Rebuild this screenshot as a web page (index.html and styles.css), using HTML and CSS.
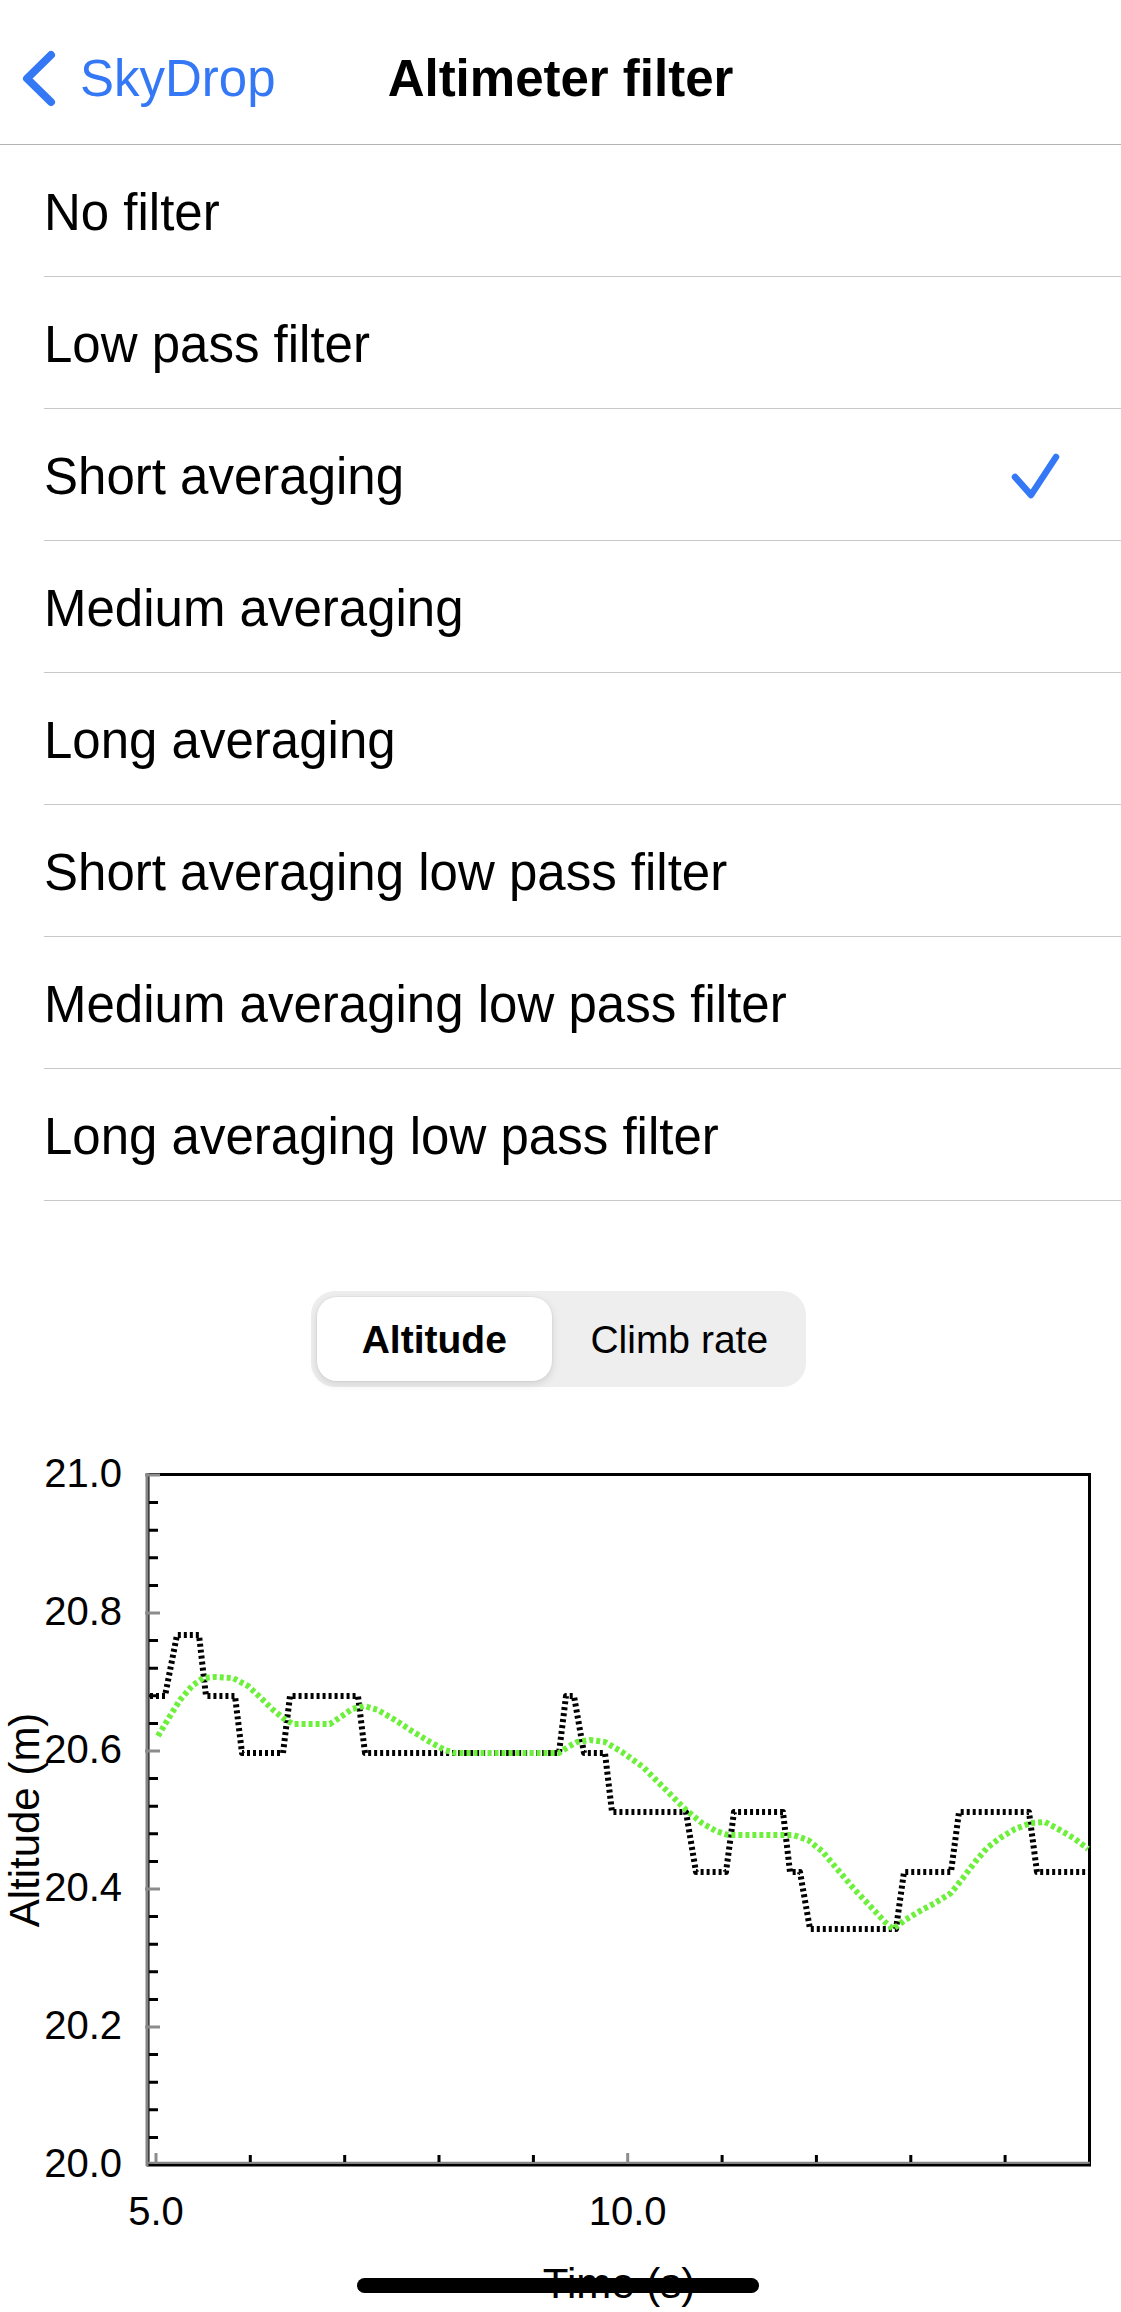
FILE: index.html
```html
<!DOCTYPE html>
<html>
<head>
  <title>Altimeter filter</title>
  <link rel="stylesheet" href="styles.css">
</head>
<body>
  <div class="screen">
    <div class="navbar">
      <div class="nav-back">
        <svg class="chevron" width="42" height="67" viewBox="0 0 42 67">
          <path d="M33 10 L9 33.5 L33 57" />
        </svg>
        <span class="nav-back-label">SkyDrop</span>
      </div>
      <div class="nav-title">Altimeter filter</div>
      <div></div>
    </div>

    <ul class="filter-list">
      <li class="filter-row"><span class="filter-label">No filter</span></li>
      <li class="filter-row"><span class="filter-label">Low pass filter</span></li>
      <li class="filter-row">
        <span class="filter-label">Short averaging</span>
        <svg class="check" width="56" height="56" viewBox="0 0 56 56">
          <path d="M7 29 L23 47 L48 9" />
        </svg>
      </li>
      <li class="filter-row"><span class="filter-label">Medium averaging</span></li>
      <li class="filter-row"><span class="filter-label">Long averaging</span></li>
      <li class="filter-row"><span class="filter-label">Short averaging low pass filter</span></li>
      <li class="filter-row"><span class="filter-label">Medium averaging low pass filter</span></li>
      <li class="filter-row"><span class="filter-label">Long averaging low pass filter</span></li>
    </ul>

    <div class="segment-wrap">
      <div class="segmented">
        <div class="segment selected">Altitude</div>
        <div class="segment">Climb rate</div>
      </div>
    </div>

    <div class="chart">
      <svg width="1121" height="882" viewBox="0 1430 1121 882">
        <!-- frame -->
        <rect class="frame" x="148" y="1474.5" width="941.5" height="690.5" />
        <line class="axis" x1="147" y1="1473" x2="147" y2="2166" />
        <line class="axis axis-x" x1="146" y1="2162.8" x2="1090" y2="2162.8" />

        <!-- y ticks -->
        <path class="tick-minor" d="M149 1502.6h9 M149 1530.2h9 M149 1557.8h9 M149 1585.4h9
          M149 1640.6h9 M149 1668.2h9 M149 1695.8h9 M149 1723.4h9
          M149 1778.6h9 M149 1806.2h9 M149 1833.8h9 M149 1861.4h9
          M149 1916.6h9 M149 1944.2h9 M149 1971.8h9 M149 1999.4h9
          M149 2054.6h9 M149 2082.2h9 M149 2109.8h9 M149 2137.4h9" />
        <path class="tick-major" d="M145 1475h15 M145 1613h15 M145 1751h15 M145 1889h15 M145 2027h15" />

        <!-- x ticks -->
        <path class="tick-minor" d="M250.3 2162v-7 M344.7 2162v-7 M439 2162v-7 M533.4 2162v-7
          M722.1 2162v-7 M816.4 2162v-7 M910.8 2162v-7 M1005.1 2162v-7" />
        <path class="tick-major" d="M156 2164v-11 M627.7 2164v-11" />

        <!-- labels -->
        <text class="tick-label" x="122" y="1487" text-anchor="end">21.0</text>
        <text class="tick-label" x="122" y="1625" text-anchor="end">20.8</text>
        <text class="tick-label" x="122" y="1763" text-anchor="end">20.6</text>
        <text class="tick-label" x="122" y="1901" text-anchor="end">20.4</text>
        <text class="tick-label" x="122" y="2039" text-anchor="end">20.2</text>
        <text class="tick-label" x="122" y="2177" text-anchor="end">20.0</text>
        <text class="tick-label" x="156" y="2225" text-anchor="middle">5.0</text>
        <text class="tick-label" x="627.7" y="2225" text-anchor="middle">10.0</text>
        <text class="axis-title" x="619" y="2298" text-anchor="middle">Time (s)</text>
        <text class="axis-title" transform="translate(39 1820) rotate(-90)" text-anchor="middle">Altitude (m)</text>

        <!-- raw altitude -->
        <polyline class="series raw" points="150,1696 165,1696 177,1635 199,1635 206,1696 235,1696 242,1753 283,1753
          290,1696 358,1696 365,1753 559,1753 566,1696 574,1696 584,1753 605,1753 612,1812 686,1812
          696,1872 726,1872 734,1812 783,1812 790,1872 800,1872 810,1929 896,1929 904,1872 951,1872
          959,1812 1029,1812 1037,1872 1088,1872" />

        <!-- filtered altitude -->
        <polyline class="series filtered" points="158,1736 170,1716 180,1700 192,1686 203,1678 215,1677 233,1678
          248,1686 260,1697 272,1709 283,1718 293,1724 330,1724 342,1716 352,1709 364,1706 378,1710
          395,1720 412,1731 430,1742 445,1750 455,1753 559,1753 568,1747 577,1742 590,1740 605,1742
          622,1752 643,1767 665,1789 686,1810 702,1823 716,1831 728,1835 793,1835 808,1840 822,1851
          838,1870 855,1890 872,1908 885,1922 893,1929 905,1920 920,1911 935,1903 951,1893 963,1878
          975,1862 987,1848 1000,1838 1015,1829 1031,1823 1045,1822 1060,1830 1075,1839 1088,1849" />
      </svg>
    </div>

    <div class="home-indicator"></div>
  </div>
</body>
</html>
```

FILE: styles.css
```css
:root {
  --blue: #3478f6;
  --separator: #c8c8cb;
  --nav-border: #b3b3b3;
  --segment-bg: #eeeeef;
  --filtered: #6cf03c;
}

* {
  margin: 0;
  padding: 0;
  box-sizing: border-box;
}

body {
  width: 1121px;
  height: 2312px;
  overflow: hidden;
  background: #ffffff;
  color: #000000;
  font-family: "Liberation Sans", Arial, sans-serif;
}

.screen {
  position: relative;
  height: 2312px;
}

/* nav bar */
.navbar {
  display: grid;
  grid-template-columns: 1fr auto 1fr;
  align-items: center;
  height: 145px;
  padding-top: 12px;
  border-bottom: 1px solid var(--nav-border);
}

.nav-back {
  display: flex;
  align-items: center;
  gap: 20px;
  padding-left: 18px;
  color: var(--blue);
}

.chevron path {
  fill: none;
  stroke: var(--blue);
  stroke-width: 8;
  stroke-linecap: round;
  stroke-linejoin: round;
}

.nav-back-label {
  font-size: 51px;
  line-height: 1;
}

.nav-title {
  font-size: 51px;
  font-weight: 700;
  line-height: 1;
}

/* filter list */
.filter-list {
  list-style: none;
}

.filter-row {
  display: flex;
  align-items: center;
  justify-content: space-between;
  height: 132px;
  margin-left: 44px;
  padding-top: 3px;
  padding-right: 57px;
  border-bottom: 1px solid var(--separator);
}

.filter-label {
  font-size: 51px;
  line-height: 1;
}

.check path {
  fill: none;
  stroke: var(--blue);
  stroke-width: 6.5;
  stroke-linecap: round;
  stroke-linejoin: round;
}

/* segmented control */
.segment-wrap {
  display: flex;
  justify-content: center;
  margin-top: 90px;
  padding-right: 4px;
}

.segmented {
  display: grid;
  grid-template-columns: 1fr 1fr;
  width: 495px;
  height: 96px;
  padding: 6px;
  border-radius: 24px;
  background: var(--segment-bg);
}

.segment {
  display: flex;
  align-items: center;
  justify-content: center;
  font-size: 39px;
  line-height: 1;
}

.segment.selected {
  margin-right: 7px;
  border-radius: 20px;
  background: #ffffff;
  font-weight: 700;
  box-shadow: 0 3px 8px rgba(0, 0, 0, 0.12), 0 0 0 1px rgba(0, 0, 0, 0.03);
}

/* chart */
.chart {
  margin-top: 43px;
  height: 882px;
}

.chart svg {
  display: block;
}

.frame {
  fill: none;
  stroke: #000000;
  stroke-width: 3;
}

.axis {
  stroke: #858585;
  stroke-width: 3;
}

.axis-x {
  stroke-width: 2;
}

.tick-minor {
  fill: none;
  stroke: #000000;
  stroke-width: 3;
}

.tick-major {
  fill: none;
  stroke: #8c8c8c;
  stroke-width: 3;
}

.tick-label {
  font-family: "Liberation Sans", Arial, sans-serif;
  font-size: 40px;
  fill: #000000;
}

.axis-title {
  font-family: "Liberation Sans", Arial, sans-serif;
  font-size: 42px;
  fill: #000000;
}

.series {
  fill: none;
  stroke-width: 6;
  stroke-linejoin: round;
}

.series.raw {
  stroke: #000000;
  stroke-dasharray: 3 3;
}

.series.filtered {
  stroke: var(--filtered);
  stroke-dasharray: 4 3;
}

.home-indicator {
  position: absolute;
  left: 357px;
  bottom: 19px;
  width: 402px;
  height: 15px;
  border-radius: 8px;
  background: #000000;
}
```
